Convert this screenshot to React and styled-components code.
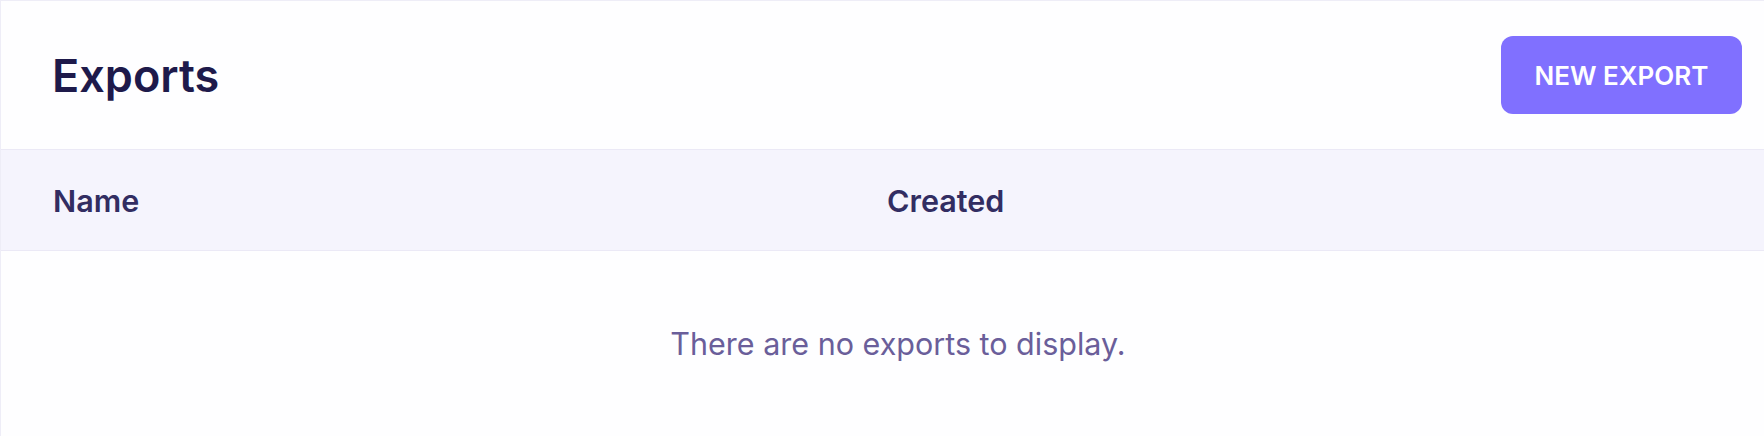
import React from "react";
import styled, { createGlobalStyle } from "styled-components";

const Global = createGlobalStyle`
  html, body {
    margin: 0;
    padding: 0;
    overflow: hidden;
    background: #ffffff;
  }
  body {
    font-family: Inter, "Noto Sans", sans-serif;
  }
`;

const Card = styled.section`
  box-sizing: border-box;
  width: 1796px;
  height: 436px;
  border: 1px solid #eeedf7;
  border-bottom: none;
  background: #fefeff;
`;

const Header = styled.header`
  box-sizing: border-box;
  height: 149px;
  display: flex;
  align-items: center;
  justify-content: space-between;
  padding: 0 53px 0 51px;
  border-bottom: 1px solid #ebe9f6;
`;

const Title = styled.h1`
  margin: 0;
  font-size: 45px;
  font-weight: 600;
  color: #1e1a4b;
`;

const PrimaryButton = styled.button`
  box-sizing: border-box;
  width: 241px;
  height: 78px;
  border: none;
  border-radius: 12px;
  background: #8070ff;
  color: #ffffff;
  font-family: Inter, sans-serif;
  font-size: 26px;
  font-weight: 600;
  cursor: pointer;
`;

const TableHead = styled.div`
  box-sizing: border-box;
  height: 101px;
  display: grid;
  grid-template-columns: 834px 1fr;
  align-items: center;
  padding-left: 52px;
  background: #f5f4fd;
  border-bottom: 1px solid #ebe9f6;
`;

const HeadCell = styled.div`
  font-size: 30.5px;
  font-weight: 600;
  color: #322d62;
`;

const Empty = styled.div`
  padding: 72px 0 0;
  text-align: center;
  font-size: 30.5px;
  line-height: 42px;
  font-weight: 400;
  color: #6a5e9a;
`;

export default function App() {
  return (
    <>
      <Global />
      <Card>
        <Header>
          <Title>Exports</Title>
          <PrimaryButton>NEW EXPORT</PrimaryButton>
        </Header>
        <TableHead>
          <HeadCell>Name</HeadCell>
          <HeadCell>Created</HeadCell>
        </TableHead>
        <Empty>There are no exports to display.</Empty>
      </Card>
    </>
  );
}
